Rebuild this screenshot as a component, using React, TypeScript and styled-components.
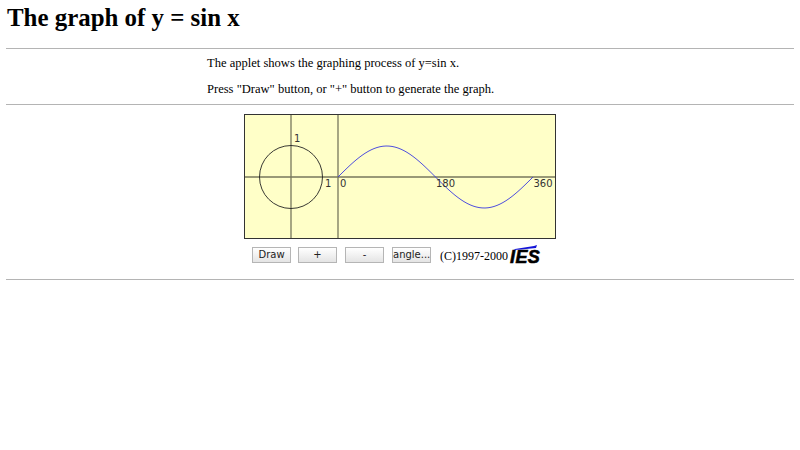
import React from "react";
import styled, { createGlobalStyle } from "styled-components";

// Global
const GlobalStyle = createGlobalStyle`
  html, body {
    margin: 0;
    background: #fff;
    color: #000;
    font-family: "Liberation Serif", "Times New Roman", serif;
  }
`;

// Styles
const Page = styled.div`
  padding: 0 6px 0 7px;
`;

const Title = styled.h1`
  margin: 0;
  padding-top: 4px;
  font-size: 24.9px;
  line-height: 27px;
  font-weight: bold;
  white-space: nowrap;
`;

const Rule = styled.hr<{ $top: number }>`
  margin: ${(props) => props.$top}px 0 0 -1px;
  border: 0;
  height: 1px;
  background: #b4b4b4;
`;

const Intro = styled.div`
  padding: 7px 0 0 200px;
  height: 48px;
  box-sizing: border-box;
`;

const IntroLine = styled.p`
  margin: 0 0 12px;
  font-size: 12.55px;
  line-height: 14px;
  white-space: nowrap;
`;

const Applet = styled.div`
  margin: 9px 0 0 237px;
  width: 312px;
`;

const Canvas = styled.svg`
  display: block;
  width: 312px;
  height: 125px;
`;

const Controls = styled.div`
  display: flex;
  align-items: center;
  margin-top: 8px;
  padding-left: 8px;
  height: 16px;
`;

const Button = styled.button<{ $gap: number }>`
  flex: none;
  width: 39px;
  margin-right: ${(props) => props.$gap}px;
  height: 16px;
  padding: 0;
  border: 1px solid #b5b5b5;
  border-radius: 0;
  background: linear-gradient(#ffffff, #e4e4e4);
  color: #222;
  font-family: "DejaVu Sans", Verdana, sans-serif;
  font-size: 10px;
  line-height: 14px;
`;

const Copyright = styled.span`
  font-size: 12px;
  margin-top: 3px;
  white-space: nowrap;
`;

const Logo = styled.span`
  position: relative;
  display: inline-block;
  flex: none;
  width: 32px;
  height: 20px;
  margin-left: 2px;
  margin-top: -1px;
`;

const LogoText = styled.span`
  position: absolute;
  left: 0;
  top: 3px;
  font-family: "Liberation Sans", Arial, sans-serif;
  font-size: 18px;
  line-height: 18px;
  font-weight: bold;
  font-style: italic;
  letter-spacing: 0.4px;
  -webkit-text-stroke: 0.6px #000;
  color: #000;
`;

const Swoosh = styled.svg`
  position: absolute;
  left: 3px;
  top: 0;
  width: 28px;
  height: 6px;
`;

const AXIS = "#77775c";
const LABEL = "#333";

// Sine curve, one full turn over 195px
const sinePoints = Array.from({ length: 66 }, (_, i) => {
  const x = i * 3;
  return `${94 + x},${63 - 31 * Math.sin((x / 195) * 2 * Math.PI)}`;
}).join(" ");

// Component
const App: React.FC = () => {
  return (
    <Page>
      <GlobalStyle />
      <Title>The graph of y = sin x</Title>
      <Rule $top={17} />
      <Intro>
        <IntroLine>The applet shows the graphing process of y=sin x.</IntroLine>
        <IntroLine>Press "Draw" button, or "+" button to generate the graph.</IntroLine>
      </Intro>
      <Rule $top={7} />
      <Applet>
        <Canvas viewBox="0 0 312 125">
          <rect x="0.5" y="0.5" width="311" height="124" fill="#ffffc8" stroke="#333" />
          <g stroke={AXIS} strokeWidth="1.3">
            <line x1="1" y1="63" x2="311" y2="63" />
            <line x1="47" y1="1" x2="47" y2="124" />
            <line x1="94" y1="1" x2="94" y2="124" />
          </g>
          <circle cx="47" cy="63" r="31.5" fill="none" stroke="#222" strokeWidth="0.9" />
          <polyline points={sinePoints} fill="none" stroke="#3a3ae0" strokeWidth="0.9" />
          <g fontFamily="'DejaVu Sans', Verdana, sans-serif" fontSize="10" fill={LABEL}>
            <text x="50" y="28">1</text>
            <text x="81" y="73">1</text>
            <text x="96" y="73">0</text>
            <text x="192" y="73">180</text>
            <text x="289.5" y="73">360</text>
          </g>
        </Canvas>
        <Controls>
          <Button $gap={7}>Draw</Button>
          <Button $gap={8}>+</Button>
          <Button $gap={8}>-</Button>
          <Button $gap={9}>angle...</Button>
          <Copyright>(C)1997-2000</Copyright>
          <Logo>
            <LogoText>IES</LogoText>
            <Swoosh viewBox="0 0 28 6">
              <path d="M2 4 L21 1 L24 0 L23 3 L8 4.5 L1 5 Z" fill="#1414d8" />
            </Swoosh>
          </Logo>
        </Controls>
      </Applet>
      <Rule $top={16} />
    </Page>
  );
};

export default App;
